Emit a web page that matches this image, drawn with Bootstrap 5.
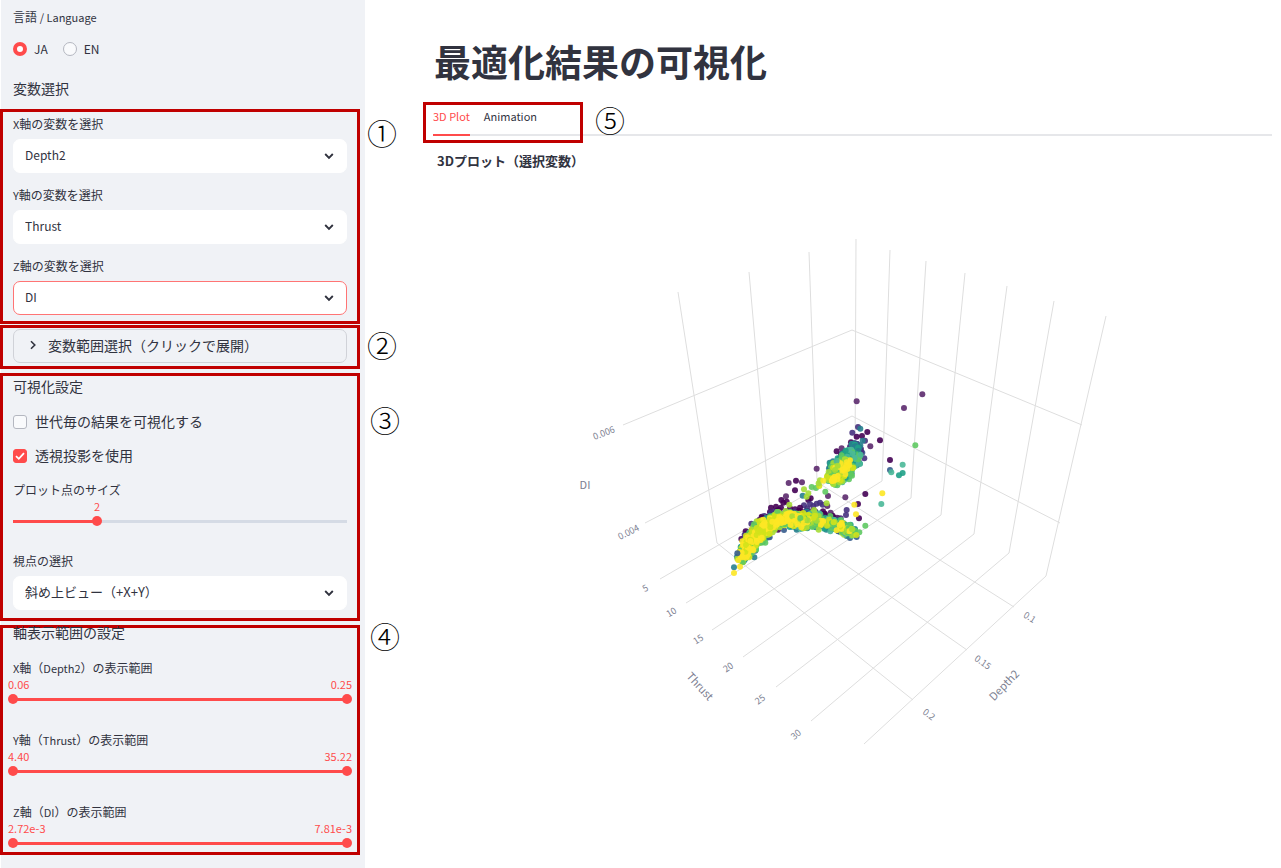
<!DOCTYPE html>
<html lang="ja">
<head>
<meta charset="utf-8">
<meta name="viewport" content="width=device-width, initial-scale=1">
<title>最適化結果の可視化</title>
<link rel="stylesheet" href="https://cdn.jsdelivr.net/npm/bootstrap@5.3.0/dist/css/bootstrap.min.css">
<style>
:root { --ink: #31333f; --accent: #ff4b4b; --mark: #c00000; }
body { font-family: "Noto Sans CJK JP", sans-serif; color: var(--ink); background: #fff; }
.side { flex: 0 0 365px; background: #f0f2f6; border-left: 1px solid #fff; font-size: 12px; line-height: 18px; }
.side-top { padding: 8px 12px 0; }
.side legend { float: none; margin: 0; font-size: 12px; line-height: 18px; }
.side h2 { font-size: 14px; line-height: 20px; font-weight: 400; margin: 0; }
.side-top h2 { margin-top: 20px; }
.latin { font-size: 11px; }
.callout { position: relative; border: 3px solid var(--mark); margin: 0 5px 0 -1px; padding: 0 10px; }
.callout-num { position: absolute; font-size: 30px; line-height: 30px; width: 30px; font-weight: 300; color: #000; }
.g1 { margin-top: 11px; padding-top: 3px; padding-bottom: 6px; }
.g2 { margin-top: 1px; padding-top: 1px; padding-bottom: 3px; }
.g3 { margin-top: 4px; padding-bottom: 8px; }
.g4 { margin-top: 4px; padding-bottom: 1px; }
.g1 .callout-num, .g2 .callout-num { left: 364px; }
.g3 .callout-num, .g4 .callout-num { left: 367px; }
.g1 .callout-num { top: 5px; }
.g2 .callout-num { top: 1px; }
.g3 .callout-num { top: 28px; }
.g4 .callout-num { top: -8px; }
.side .g4 h2 { line-height: 9px; margin-bottom: 22px; }
.field label, .size-field label, .view-field label, .span-field label { display: block; }
.field + .field { margin-top: 13px; }
.pick { height: 34px; margin-top: 6px; padding: 0 30px 2px 11px; border: 1px solid #fff; border-radius: 7px; font-size: 12px; line-height: 30px; color: var(--ink);
  background: #fff url("data:image/svg+xml,%3Csvg xmlns='http://www.w3.org/2000/svg' viewBox='0 0 10 10'%3E%3Cpath d='M1.2 3 5 6.8 8.8 3' fill='none' stroke='%2331333f' stroke-width='1.9'/%3E%3C/svg%3E") no-repeat right 12px center / 10px 10px; }
.pick-active { border-color: #ff7474; }
.pick-ja { font-size: 13px; }
.opener { height: 34px; width: 100%; border: 1px solid #d0d2d8; border-radius: 7px; background: transparent; color: var(--ink); font-size: 14px; line-height: 30px; padding: 0 14px 2px; gap: 10px; }
.tick { display: flex; align-items: center; gap: 8px; height: 22px; margin-top: 12px; font-size: 14px; }
.tick:first-of-type { margin-top: 14px; }
.tick input, .lang input { appearance: none; flex: none; width: 14px; height: 14px; margin: 0; border: 1px solid #b4b7c0; background: #f9fafc; }
.tick input { border-radius: 3px; margin-top: 2px; }
.tick input:checked { border-color: var(--accent); background: var(--accent) url("data:image/svg+xml,%3Csvg xmlns='http://www.w3.org/2000/svg' viewBox='0 0 12 12'%3E%3Cpath d='M2 6.2 4.8 8.8 10 3.2' fill='none' stroke='%23fff' stroke-width='1.8'/%3E%3C/svg%3E") center / 12px 12px; }
.lang { display: flex; margin-top: 14px; gap: 15px; }
.lang label { display: flex; align-items: center; gap: 7px; }
.lang input { border-radius: 50%; }
.lang input:checked { border: 4px solid var(--accent); background: #fff; }
.vals { display: flex; justify-content: space-between; margin: 0 -5px; font-size: 11px; line-height: 14px; color: var(--accent); }
.track { display: grid; margin: 0 -5px; height: 16px; }
.track input { grid-area: 1 / 1; appearance: none; width: 100%; height: 16px; margin: 0; background: linear-gradient(var(--accent), var(--accent)) no-repeat center / calc(100% - 10px) 3px; }
.track input + input { background: none; pointer-events: none; }
.track input::-webkit-slider-thumb { appearance: none; width: 10px; height: 10px; border-radius: 50%; background: var(--accent); pointer-events: auto; }
.track .single { background-image: linear-gradient(90deg, var(--accent) 25%, #d5dbe5 25%); }
.size-val { display: block; padding-left: 81px; font-size: 11px; line-height: 14px; color: var(--accent); }
.size-field { margin-top: 15px; }
.view-field { margin-top: 23px; }
.span-field + .span-field { margin-top: 24px; }
.main-pane { padding: 37px 9px 0 68px; min-width: 0; }
.main-pane h1 { font-size: 37px; line-height: 48px; font-weight: 700; margin: 0 0 22px 1px; }
.tabs { position: relative; gap: 14px; border-bottom: 2px solid #e6e7ea; }
.tabs .nav-link { padding: 0 0 9px; margin-bottom: -2px; border-bottom: 2px solid transparent; font-size: 11px; line-height: 18px; color: var(--ink); }
.tabs .nav-link.active { color: var(--accent); border-color: var(--accent); }
.tab-mark { position: absolute; left: -10px; top: -5px; width: 160px; height: 41px; border: 3px solid var(--mark); pointer-events: none; }
.tab-mark .callout-num { left: 169px; top: -1px; }
.main-pane h2 { font-size: 13px; line-height: 20px; font-weight: 700; margin: 15px 0 0 4px; }
.grid-lines { fill: none; stroke: #dedede; stroke-width: 1; }
.plot-text { font-size: 9px; fill: #7b7e90; text-anchor: middle; }
.plot-text .axis-name { font-size: 11px; }
</style>
</head>
<body>
<div class="d-flex min-vh-100">
  <aside class="side">
    <div class="side-top">
      <fieldset>
        <legend>言語 <span class="latin">/ Language</span></legend>
        <div class="lang">
          <label><input type="radio" name="lang" checked>JA</label>
          <label><input type="radio" name="lang">EN</label>
        </div>
      </fieldset>
      <h2>変数選択</h2>
    </div>

    <section class="callout g1">
      <div class="field"><label for="vx"><span class="latin">X</span>軸の変数を選択</label>
        <select class="form-select pick" id="vx"><option>Depth2</option><option>Thrust</option><option>DI</option></select></div>
      <div class="field"><label for="vy"><span class="latin">Y</span>軸の変数を選択</label>
        <select class="form-select pick" id="vy"><option>Thrust</option><option>Depth2</option><option>DI</option></select></div>
      <div class="field"><label for="vz"><span class="latin">Z</span>軸の変数を選択</label>
        <select class="form-select pick pick-active" id="vz"><option>DI</option><option>Depth2</option><option>Thrust</option></select></div>
      <span class="callout-num">①</span>
    </section>

    <section class="callout g2">
      <button type="button" class="opener d-flex align-items-center">
        <svg width="10" height="10" viewBox="0 0 10 10"><path d="M3 1.2 6.8 5 3 8.8" fill="none" stroke="#31333f" stroke-width="1.6"/></svg>
        変数範囲選択（クリックで展開）
      </button>
      <span class="callout-num">②</span>
    </section>

    <section class="callout g3">
      <h2>可視化設定</h2>
      <label class="tick"><input type="checkbox">世代毎の結果を可視化する</label>
      <label class="tick"><input type="checkbox" checked>透視投影を使用</label>
      <div class="size-field">
        <label for="size">プロット点のサイズ</label>
        <output class="size-val" for="size">2</output>
        <div class="track"><input class="single" type="range" id="size" min="1" max="5" value="2"></div>
      </div>
      <div class="view-field"><label for="view">視点の選択</label>
        <select class="form-select pick pick-ja" id="view"><option>斜め上ビュー（+X+Y）</option></select></div>
      <span class="callout-num">③</span>
    </section>

    <section class="callout g4">
      <h2>軸表示範囲の設定</h2>
      <div class="span-field"><label for="rx"><span class="latin">X</span>軸（<span class="latin">Depth2</span>）の表示範囲</label>
        <div class="vals"><span>0.06</span><span>0.25</span></div>
        <div class="track"><input type="range" id="rx" value="0"><input type="range" aria-label="X軸の上限" value="100"></div></div>
      <div class="span-field"><label for="ry"><span class="latin">Y</span>軸（<span class="latin">Thrust</span>）の表示範囲</label>
        <div class="vals"><span>4.40</span><span>35.22</span></div>
        <div class="track"><input type="range" id="ry" value="0"><input type="range" aria-label="Y軸の上限" value="100"></div></div>
      <div class="span-field"><label for="rz"><span class="latin">Z</span>軸（<span class="latin">DI</span>）の表示範囲</label>
        <div class="vals"><span>2.72e-3</span><span>7.81e-3</span></div>
        <div class="track"><input type="range" id="rz" value="0"><input type="range" aria-label="Z軸の上限" value="100"></div></div>
      <span class="callout-num">④</span>
    </section>
  </aside>

  <main class="main-pane flex-grow-1">
    <h1>最適化結果の可視化</h1>
    <nav class="tabs nav">
      <a class="nav-link active" href="#plot">3D Plot</a>
      <a class="nav-link" href="#animation">Animation</a>
      <div class="tab-mark"><span class="callout-num">⑤</span></div>
    </nav>
    <h2>3Dプロット（選択変数）</h2>
    <svg id="plot" class="d-block w-100" viewBox="433 171 839 600">
      <g class="grid-lines">
        <path d="M678 292 717 543M749 272 770 512M809 252 817 480M856 239 855 466M890 250 884 430 882 481M926 261 911 498M965 273 941 515M1007 286 974 534M1054 301 1009 553M1106 316 1046 576"/>
        <path d="M623 425 852 330 1082 425M645 523 852 416 1060 523"/>
        <path d="M660 579 855 466M686 603 882 481M712 630 911 498M743 657 941 515M776 687 974 534M811 721 1009 553M864 744 1046 576"/>
        <path d="M717 543 913 700M770 512 967 650M817 482 1014 607"/>
      </g>
      <g id="points" transform="translate(720 380) scale(.3333)"></g>
      <g class="plot-text">
        <text transform="translate(605 436) rotate(-21)">0.006</text>
        <text transform="translate(630 535) rotate(-27)">0.004</text>
        <text class="axis-name" x="585" y="489">DI</text>
        <text transform="translate(647 591) rotate(-30)">5</text>
        <text transform="translate(673 615) rotate(-31)">10</text>
        <text transform="translate(700 642) rotate(-33)">15</text>
        <text transform="translate(730 670) rotate(-35)">20</text>
        <text transform="translate(762 702) rotate(-37)">25</text>
        <text transform="translate(798 737) rotate(-40)">30</text>
        <text class="axis-name" transform="translate(697 689) rotate(47)">Thrust</text>
        <text transform="translate(1028 620) rotate(32)">0.1</text>
        <text transform="translate(981 665) rotate(35)">0.15</text>
        <text transform="translate(927 717) rotate(38)">0.2</text>
        <text class="axis-name" transform="translate(1007 688) rotate(-46)">Depth2</text>
      </g>
    </svg>
  </main>
</div>
<script>
// Viridis steps, oldest generation first
const V = { p: '#440154', q: '#5c2a6e', i: '#46327e', b: '#365c8d', t: '#277f8e', s: '#1fa187', a: '#4ab898', g: '#5ec962', l: '#a5db36', m: '#d2e21b', y: '#fde725' };
const layer = document.getElementById('points');
let seed = 11;
const rnd = () => (seed = (seed * 16807) % 2147483647) / 2147483647;
const spreadOf = () => rnd() + rnd() - 1;
function dot(x, y, c) {
  const e = document.createElementNS('http://www.w3.org/2000/svg', 'circle');
  e.setAttribute('cx', Math.round(x)); e.setAttribute('cy', Math.round(y)); e.setAttribute('r', 9);
  e.setAttribute('fill', V[c]); e.setAttribute('fill-opacity', .9);
  layer.appendChild(e);
}
// Scatter n points round a polyline of [x, y, halfWidth] between from..to (0..1)
function band(line, n, from, to, shift, colours, k = 1) {
  for (let j = 0; j < n; j++) {
    const u = (from + rnd() * (to - from)) * (line.length - 1), i = Math.min(Math.floor(u), line.length - 2), f = u - i;
    const [ax, ay, aw] = line[i], [bx, by, bw] = line[i + 1];
    const len = Math.hypot(bx - ax, by - ay), nx = (by - ay) / len, ny = -(bx - ax) / len;
    const d = (spreadOf() * k + shift) * (aw + (bw - aw) * f);
    dot(ax + (bx - ax) * f + nx * d, ay + (by - ay) * f + ny * d, colours[Math.floor(rnd() * colours.length)]);
  }
}
const arch = [[54,550,10],[84,502,34],[114,462,38],[152,430,32],[190,412,26],[238,422,28],[290,418,28],[340,430,24],[380,446,24],[404,458,12]];
const cloud = [[332,308,20],[346,285,38],[368,264,44],[390,238,38],[404,212,24],[416,185,14]];
const single = (s) => s.trim().split(/\s+/).forEach(d => { const [x, y, c] = d.split(','); dot(+x, +y, c); });

single('410,64,q 607,43,q 552,84,q 480,181,p 510,240,p 510,270,b 290,266,q 228,302,p 206,309,q 246,307,q 225,331,p 198,349,q 436,342,p 414,372,p 417,415,p 376,352,q 380,390,i 378,405,i 362,415,i 324,348,q 442,156,p 451,199,q 414,141,i 397,158,i 421,146,t 410,170,p 426,168,p 435,182,i 428,182,t 350,214,p 365,205,q 393,187,p 390,200,i 363,223,p 372,219,p 415,207,p 427,218,b 153,383,p 168,380,p 184,360,p 190,368,p 200,365,p 150,396,p 170,392,p 183,383,p 160,403,p 265,360,p 272,355,p 252,376,i 262,385,i 280,378,i 300,368,i 290,371,i 322,378,q 308,374,i 240,383,p 270,372,i 125,410,p 118,420,p 248,347,t 103,532,t 42,562,t 192,450,b 174,449,p 390,474,b 410,471,b 225,388,p 210,385,p 332,398,q 330,280,p 420,222,t 405,200,t 433,235,i');
band(arch, 130, .12, .8, .6, 'ppiiq', .5);
band(arch, 240, .02, 1, 0, 'btts', 1);
band(arch, 130, .5, 1, -.4, 'bttsa', .7);
band(arch, 250, .02, 1, 0, 'sggla', .95);
band(arch, 300, .02, .66, 0, 'lmlmg', .9);
band(arch, 190, .04, .55, 0, 'yymy', .75);
band(arch, 60, .5, .95, 0, 'lmygy', .8);
band(cloud, 70, .35, .95, 0, 'piib', 1);
band(cloud, 140, .1, .95, 0, 'btts', 1);
band(cloud, 150, 0, .8, -.1, 'sgga', 1);
band(cloud, 80, 0, .55, 0, 'lmlg', .9);
band(cloud, 22, 0, .6, 0, 'y', .7);
single('586,196,g 514,277,a 548,254,a 548,279,s 537,286,s 484,372,a 436,437,g 418,457,g 252,328,l 275,321,g 288,324,g 298,318,m 296,310,l 300,301,l 265,340,l 260,350,l 320,370,l 282,390,l 296,449,l 316,335,g 208,374,l 397,448,l 409,465,m 375,238,l 388,255,y 380,247,y 310,302,y 403,374,y 408,403,y 487,340,y 42,579,y 60,560,y 55,541,y 350,243,a 353,257,l 345,270,l 52,520,b');
</script>
<script src="https://cdn.jsdelivr.net/npm/bootstrap@5.3.0/dist/js/bootstrap.bundle.min.js"></script>
</body>
</html>
